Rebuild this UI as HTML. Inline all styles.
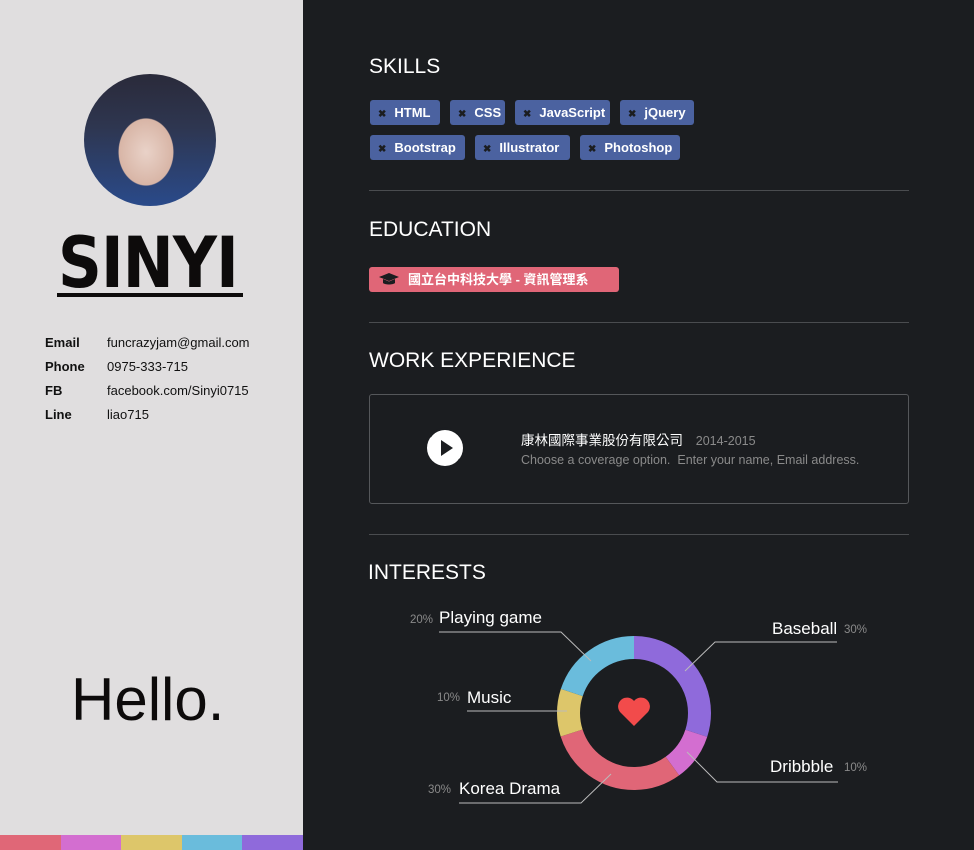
<!DOCTYPE html>
<html><head><meta charset="utf-8"><style>
*{margin:0;padding:0;box-sizing:border-box}
body{width:974px;height:850px;overflow:hidden;background:#1b1d20;font-family:"Liberation Sans","Noto Sans CJK TC",sans-serif;position:relative}
.left{position:absolute;left:0;top:0;width:303px;height:850px;background:#e0dedf}
.photo{position:absolute;left:84px;top:74px;width:132px;height:132px;border-radius:50%;overflow:hidden;background:radial-gradient(ellipse 45px 55px at 62px 78px,#e9d2c8 0%,#d8b5a6 60%,transparent 62%),linear-gradient(180deg,#2a2a3a 0%,#2e3650 40%,#2a4a8a 100%)}
.name{position:absolute;left:58px;top:222px;font-size:70px;font-weight:bold;color:#0d0b0b;letter-spacing:-1px;font-family:"DejaVu Sans","Liberation Sans",sans-serif;transform:scaleX(.87);transform-origin:left}
.uline{position:absolute;left:57px;top:293px;width:186px;height:4px;background:#0d0b0b}
.info{position:absolute;left:45px;font-size:13px;color:#111}
.info b{display:inline-block;width:62px}
.hello{position:absolute;left:71px;top:665px;font-size:60px;color:#0d0b0b}
.bar{position:absolute;top:835px;height:15px;width:61px}
h2{position:absolute;left:369px;font-size:21px;font-weight:normal;color:#fff}
.tag{position:absolute;height:25px;background:#4b62a0;border-radius:3px;color:#fff;font-size:13px;font-weight:bold;line-height:25px;padding-left:8px}
.tag i{font-style:normal;color:#1b1d20;font-size:10px;margin-right:8px}
.hr{position:absolute;left:369px;width:540px;height:1px;background:#4a4c4f}
.lbl{position:absolute;color:#fff;font-size:17px}
.pct{position:absolute;color:#8a8a8a;font-size:11.5px}
</style></head><body>
<div class="left">
<div class="photo"></div>
<div class="name">SINYI</div>
<div class="uline"></div>
<div class="info" style="top:335px"><b>Email</b>funcrazyjam@gmail.com</div>
<div class="info" style="top:359px"><b>Phone</b>0975-333-715</div>
<div class="info" style="top:383px"><b>FB</b>facebook.com/Sinyi0715</div>
<div class="info" style="top:407px"><b>Line</b>liao715</div>
<div class="hello">Hello.</div>
<div class="bar" style="left:0;background:#e06777"></div>
<div class="bar" style="left:61px;background:#d36ed0"></div>
<div class="bar" style="left:121px;background:#ddc66a"></div>
<div class="bar" style="left:182px;background:#6abcdc"></div>
<div class="bar" style="left:242px;background:#8f6adb"></div>
</div>

<h2 style="top:55px">SKILLS</h2>
<div class="tag" style="left:370px;top:100px;width:70px"><i>✖</i>HTML</div>
<div class="tag" style="left:450px;top:100px;width:55px"><i>✖</i>CSS</div>
<div class="tag" style="left:515px;top:100px;width:95px"><i>✖</i>JavaScript</div>
<div class="tag" style="left:620px;top:100px;width:74px"><i>✖</i>jQuery</div>
<div class="tag" style="left:370px;top:135px;width:95px"><i>✖</i>Bootstrap</div>
<div class="tag" style="left:475px;top:135px;width:95px"><i>✖</i>Illustrator</div>
<div class="tag" style="left:580px;top:135px;width:100px"><i>✖</i>Photoshop</div>
<div class="hr" style="top:190px"></div>

<h2 style="top:218px">EDUCATION</h2>
<div class="tag" style="left:369px;top:267px;width:250px;background:#e06677;font-size:13px;padding-left:10px">
<svg width="20" height="14" viewBox="0 0 20 14" style="vertical-align:-2px;margin-right:9px"><path d="M10 1L0 5l10 4 10-4z M4 7v4c2 2 10 2 12 0V7l-6 2.5z" fill="#1b1d20"/></svg>國立台中科技大學 - 資訊管理系</div>
<div class="hr" style="top:322px"></div>

<h2 style="top:349px">WORK EXPERIENCE</h2>
<div style="position:absolute;left:369px;top:394px;width:540px;height:110px;border:1px solid #55575a;border-radius:3px"></div>
<svg style="position:absolute;left:424px;top:427px" width="42" height="42" viewBox="0 0 42 42"><circle cx="21" cy="21" r="18" fill="#fff"/><path d="M6 10 A18 18 0 0 1 28 3" stroke="#1b1d20" stroke-width="2" fill="none"/><path d="M36 32 A18 18 0 0 1 14 39" stroke="#1b1d20" stroke-width="2" fill="none"/><path d="M17 13v16l12-8z" fill="#1b1d20"/></svg>
<div style="position:absolute;left:521px;top:429px;font-size:13.5px;color:#fff">康林國際事業股份有限公司 <span style="color:#8a8a8a;font-size:12.5px;margin-left:9px">2014-2015</span></div>
<div style="position:absolute;left:521px;top:453px;font-size:12.5px;color:#8a8a8a">Choose a coverage option.&nbsp; Enter your name, Email address.</div>
<div class="hr" style="top:534px"></div>

<h2 style="top:561px;left:368px">INTERESTS</h2>
<svg style="position:absolute;left:0;top:0" width="974" height="850">
<g transform="rotate(-90 634 713)" fill="none" stroke-width="23">
<circle cx="634" cy="713" r="65.5" stroke="#8f6adb" stroke-dasharray="123.5 400" stroke-dashoffset="0"/>
<circle cx="634" cy="713" r="65.5" stroke="#d36ed0" stroke-dasharray="41.2 400" stroke-dashoffset="-123.5"/>
<circle cx="634" cy="713" r="65.5" stroke="#e06677" stroke-dasharray="123.5 400" stroke-dashoffset="-164.7"/>
<circle cx="634" cy="713" r="65.5" stroke="#ddc66a" stroke-dasharray="41.2 400" stroke-dashoffset="-288.2"/>
<circle cx="634" cy="713" r="65.5" stroke="#6abcdc" stroke-dasharray="82.4 400" stroke-dashoffset="-329.4"/>
</g>
<g stroke="#bbb" stroke-width="1" fill="none">
<path d="M439 632H561L591 661"/>
<path d="M837 642H715L685 671"/>
<path d="M467 711H567"/>
<path d="M838 782H717L687 752"/>
<path d="M459 803H581L611 774"/>
</g>
<path d="M634 726 L620 712 A7.5 7.5 0 0 1 634 701 A7.5 7.5 0 0 1 648 712 Z" fill="#f24b4b"/>
</svg>
<div class="lbl" style="left:439px;top:608px">Playing game</div>
<div class="pct" style="left:410px;top:614px">20%</div>
<div class="lbl" style="left:772px;top:619px">Baseball</div>
<div class="pct" style="left:844px;top:624px">30%</div>
<div class="lbl" style="left:467px;top:688px">Music</div>
<div class="pct" style="left:437px;top:692px">10%</div>
<div class="lbl" style="left:770px;top:757px">Dribbble</div>
<div class="pct" style="left:844px;top:762px">10%</div>
<div class="lbl" style="left:459px;top:779px">Korea Drama</div>
<div class="pct" style="left:428px;top:784px">30%</div>
</body></html>
